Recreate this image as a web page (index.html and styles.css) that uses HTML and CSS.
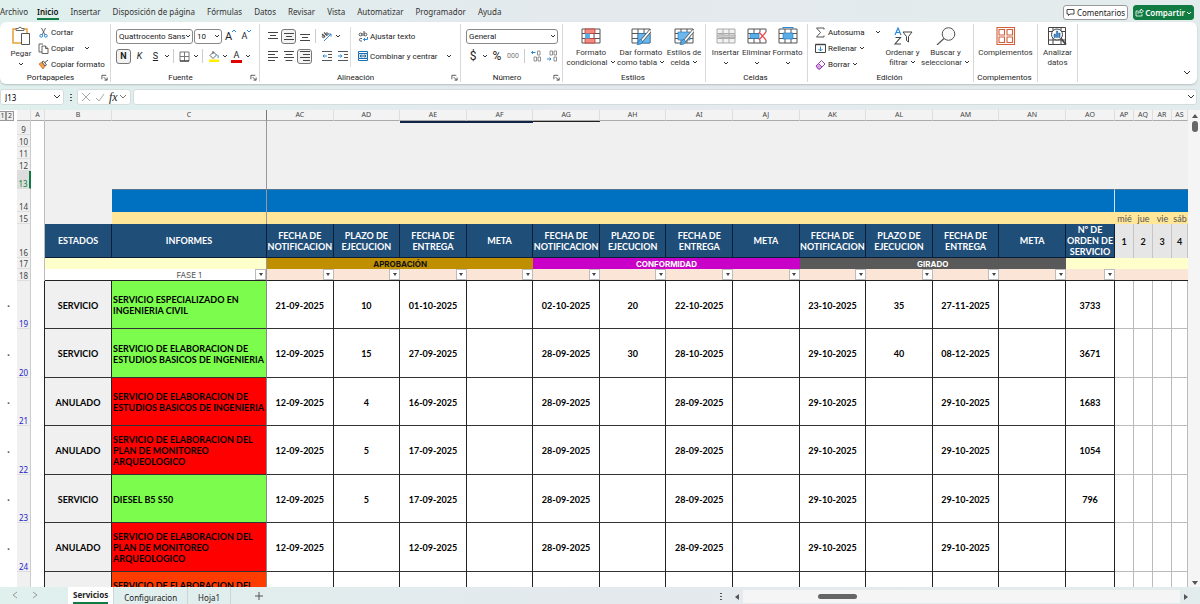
FILE: index.html
```html
<!DOCTYPE html>
<html lang="es">
<head>
    <meta charset="UTF-8">
    <meta name="viewport" content="width=device-width, initial-scale=1.0">
    <title>Servicios</title>
    <link rel="stylesheet" href="styles.css">
</head>
<body>
    <!-- Iconos reutilizados -->
    <svg class="sprite" aria-hidden="true">
        <symbol id="chev" viewBox="0 0 6 6"><path d="M1 2l2 2 2-2" fill="none" stroke="#333" stroke-width="1"/></symbol>
        <symbol id="launcher" viewBox="0 0 8 8"><path d="M1 6V1.500h5M3 3.500l3.500 3.500M7 4v3H4" fill="none" stroke="#333" stroke-width=".9"/></symbol>
        <symbol id="table" viewBox="0 0 20 18"><path d="M1 2h18v14H1zM1 6.500h18M1 11.500h18M7 2v14M13 2v14" fill="#fff" stroke="#555" stroke-width="1"/></symbol>
        <symbol id="brush" viewBox="0 0 20 18"><path d="M19 4l-8 9.500" stroke="#555" stroke-width="3.200" stroke-linecap="round"/><path d="M19 4l-8 9.500" stroke="#fff" stroke-width="1.800" stroke-linecap="round"/><path d="M6 17.500c2.500.2 5.500-.3 5.500-3.500l-2-1.500c-2.500.2-1.500 3.500-3.500 5z" fill="#5aaee8" stroke="#1f6fb5" stroke-width=".7"/></symbol>
    </svg>

    <nav class="tabs">
        <a href="#">Archivo</a>
        <a href="#" class="active">Inicio</a>
        <a href="#">Insertar</a>
        <a href="#">Disposición de página</a>
        <a href="#">Fórmulas</a>
        <a href="#">Datos</a>
        <a href="#">Revisar</a>
        <a href="#">Vista</a>
        <a href="#">Automatizar</a>
        <a href="#">Programador</a>
        <a href="#">Ayuda</a>
        <div class="tabs-right">
            <button class="comments"><svg width="9" height="9" viewBox="0 0 9 9"><path d="M1 1.500h7v4.500H4L2.500 7.500V6H1z" fill="none" stroke="#333" stroke-width=".9"/></svg>Comentarios</button>
            <button class="share"><svg width="9" height="9" viewBox="0 0 9 9"><path d="M3 3H1v5h6V6M3 5.500c0-2 1.500-3 3-3V1l2.500 2.200L6 5.200V4C5 4 4 4.300 3 5.500z" fill="none" stroke="#fff" stroke-width=".8"/></svg>Compartir<svg class="chev" viewBox="0 0 6 6"><path d="M1 2l2 2 2-2" fill="none" stroke="#fff"/></svg></button>
        </div>
    </nav>

    <!-- Cinta de opciones -->
    <div class="ribbon">
        <section class="group clipboard">
            <div class="tools">
                <button class="big paste">
                    <svg width="20" height="20" viewBox="0 0 20 20"><path d="M5 3H2v14h8M13 3h3v4" fill="none" stroke="#e8a33d" stroke-width="1.600"/><path d="M5 4.500V2.500h2Q9-.5 11 2.500h2v2z" fill="#fff" stroke="#666"/><path d="M10.500 7.500h8v11h-8z" fill="#fff" stroke="#555"/></svg>
                    <span>Pegar</span><svg class="chev"><use href="#chev"/></svg>
                </button>
                <div class="list">
                    <button><svg width="11" height="11" viewBox="0 0 11 11"><path d="M3.500 1l3.500 7M7.500 1L4 8" stroke="#555" stroke-width=".9"/><circle cx="3.200" cy="8.800" r="1.400" fill="none" stroke="#2b88d8"/><circle cx="7.800" cy="8.800" r="1.400" fill="none" stroke="#2b88d8"/></svg>Cortar</button>
                    <button><svg width="11" height="11" viewBox="0 0 11 11"><path d="M4 9H1V1h4M4 3h3.500L10 5.500V10.500H4zM7.500 3v2.500H10" fill="none" stroke="#555" stroke-width=".9"/></svg>Copiar<svg class="chev far"><use href="#chev"/></svg></button>
                    <button><svg width="11" height="11" viewBox="0 0 11 11"><path d="M1 5l3-2 3 4-2 3z" fill="#f3a04a" stroke="#c8661a" stroke-width=".7"/><path d="M4 3l1.500-1L8.500 6 7 7zM7 3.500L10 1" fill="#fff" stroke="#555"/></svg>Copiar formato</button>
                </div>
            </div>
            <h2><span>Portapapeles</span><svg class="launcher"><use href="#launcher"/></svg></h2>
        </section>

        <section class="group font">
            <div class="tools rows">
                <div class="row">
                    <select class="font-name" aria-label="Fuente"><option>Quattrocento Sans</option></select>
                    <select class="font-size" aria-label="Tamaño"><option>10</option></select>
                    <button class="ib grow" aria-label="Aumentar">A<svg width="4" height="4" viewBox="0 0 4 4"><path d="M0 3l2-2 2 2" fill="none" stroke="#2b88d8"/></svg></button>
                    <button class="ib grow less" aria-label="Disminuir">A<svg width="4" height="4" viewBox="0 0 4 4"><path d="M0 1l2 2 2-2" fill="none" stroke="#2b88d8"/></svg></button>
                </div>
                <div class="row">
                    <button class="ib on"><b>N</b></button>
                    <button class="ib"><i>K</i></button>
                    <button class="ib"><u>S</u></button>
                    <svg class="chev"><use href="#chev"/></svg>
                    <span class="sep"></span>
                    <button class="ib" aria-label="Bordes"><svg width="11" height="11" viewBox="0 0 11 11"><path d="M1 1h9v9H1zM5.500 1v9M1 5.500h9" fill="none" stroke="#777"/><path d="M1 10h9" stroke="#222"/></svg></button>
                    <svg class="chev"><use href="#chev"/></svg>
                    <span class="sep"></span>
                    <button class="ib" aria-label="Relleno"><svg width="12" height="12" viewBox="0 0 12 12"><path d="M2 5.500L5.500 2l3 3-3.500 3.500zM5 1v3" fill="#fff" stroke="#555" stroke-width=".9"/><path d="M9 4.500q2 1 1 3.500" fill="none" stroke="#2b88d8"/><path d="M1 9.500h10V12H1z" fill="#ffee00"/></svg></button>
                    <svg class="chev"><use href="#chev"/></svg>
                    <button class="ib fontcolor" aria-label="Color de fuente">A</button>
                    <svg class="chev"><use href="#chev"/></svg>
                </div>
            </div>
            <h2><span>Fuente</span><svg class="launcher"><use href="#launcher"/></svg></h2>
        </section>

        <section class="group align">
            <div class="tools">
                <div class="rows">
                    <div class="row">
                        <button class="ib" aria-label="Superior"><svg width="10" height="10" viewBox="0 0 10 10"><path d="M0 1.500h10M2 4.500h6M0 7.500h10" stroke="#444"/></svg></button>
                        <button class="ib on" aria-label="Medio"><svg width="10" height="10" viewBox="0 0 10 10"><path d="M0 2.500h10M2 5.500h6M0 8.500h10" stroke="#444"/></svg></button>
                        <button class="ib" aria-label="Inferior"><svg width="10" height="10" viewBox="0 0 10 10"><path d="M0 3.500h10M2 6.500h6M0 9.500h10" stroke="#444"/></svg></button>
                        <span class="sep"></span>
                        <button class="ib" aria-label="Orientación"><svg width="11" height="11" viewBox="0 0 11 11"><path d="M3 10l7-7M7.500 3H10v2.500" fill="none" stroke="#2b88d8"/><path d="M1 3l3 3M3 1.500l3 3" stroke="#555" stroke-width="1.200"/><circle cx="2.500" cy="5.500" r="1.200" fill="none" stroke="#555"/><circle cx="6" cy="3" r="1.200" fill="none" stroke="#555"/></svg></button>
                        <svg class="chev"><use href="#chev"/></svg>
                    </div>
                    <div class="row">
                        <button class="ib" aria-label="Izquierda"><svg width="10" height="10" viewBox="0 0 10 10"><path d="M0 .5h10M0 3.500h7M0 6.500h10M0 9.500h7" stroke="#444"/></svg></button>
                        <button class="ib" aria-label="Centrar"><svg width="10" height="10" viewBox="0 0 10 10"><path d="M0 .5h10M1.500 3.500h7M0 6.500h10M1.500 9.500h7" stroke="#444"/></svg></button>
                        <button class="ib on" aria-label="Derecha"><svg width="10" height="10" viewBox="0 0 10 10"><path d="M0 .5h10M3 3.500h7M0 6.500h10M3 9.500h7" stroke="#444"/></svg></button>
                        <span class="sep blank"></span>
                        <button class="ib" aria-label="Reducir sangría"><svg width="10" height="10" viewBox="0 0 10 10"><path d="M0 .5h10M6 3.500h4M6 6.500h4M0 9.500h10" stroke="#555"/><path d="M5 5H1M2.500 3.500L1 5l1.500 1.500" fill="none" stroke="#2b88d8"/></svg></button>
                        <button class="ib" aria-label="Aumentar sangría"><svg width="10" height="10" viewBox="0 0 10 10"><path d="M0 .5h10M6 3.500h4M6 6.500h4M0 9.500h10" stroke="#555"/><path d="M0 5h4M2.500 3.500L4 5 2.500 6.500" fill="none" stroke="#2b88d8"/></svg></button>
                    </div>
                </div>
                <span class="tall-sep"></span>
                <div class="rows wide">
                    <button class="row"><svg width="10" height="11" viewBox="0 0 10 11"><circle cx="2.500" cy="3.500" r="1.400" fill="none" stroke="#555"/><path d="M4 2v3M6 0v5" stroke="#555"/><circle cx="7.400" cy="3.500" r="1.400" fill="none" stroke="#555"/><path d="M4 7.500H2.500q-1 0-1 1.200t1 1.300H4" fill="none" stroke="#555"/><path d="M9.500 6v2.500H5.500M7 7L5.500 8.500 7 10" fill="none" stroke="#2b88d8"/></svg>Ajustar texto</button>
                    <button class="row"><svg width="10" height="10" viewBox="0 0 10 10"><path d="M.5.5h9v9h-9z" fill="#fff" stroke="#1f6fb5"/><path d="M.5 2.500h9v5h-9z" fill="#cfe6f8" stroke="#1f6fb5"/><path d="M2 5h6M3.500 3.800L2 5l1.500 1.200M6.500 3.800L8 5 6.500 6.200" fill="none" stroke="#1f4e79" stroke-width=".8"/></svg>Combinar y centrar<svg class="chev far"><use href="#chev"/></svg></button>
                </div>
            </div>
            <h2><span>Alineación</span><svg class="launcher"><use href="#launcher"/></svg></h2>
        </section>

        <section class="group number">
            <div class="tools rows">
                <div class="row">
                    <select class="format" aria-label="Formato de número"><option>General</option></select>
                </div>
                <div class="row">
                    <button class="ib sym">$</button>
                    <svg class="chev"><use href="#chev"/></svg>
                    <button class="ib sym">%</button>
                    <button class="ib zeros">000</button>
                    <span class="sep"></span>
                    <button class="ib" aria-label="Aumentar decimales"><svg width="10" height="12" viewBox="0 0 10 12"><path d="M4.500 2.500H.5M2 1L.5 2.500 2 4" fill="none" stroke="#2b88d8"/><path d="M6.500 1h2.500v4H6.500zM3 7h2.500v4H3zM7 7h2.500v4H7z" fill="none" stroke="#777" stroke-width=".8"/></svg></button>
                    <button class="ib" aria-label="Disminuir decimales"><svg width="10" height="12" viewBox="0 0 10 12"><path d="M0 9h4M2.500 7.500L4 9l-1.500 1.500" fill="none" stroke="#2b88d8"/><path d="M3 1h2.500v4H3zM7 1h2.500v4H7zM7 7h2.500v4H7z" fill="none" stroke="#777" stroke-width=".8"/></svg></button>
                </div>
            </div>
            <h2><span>Número</span><svg class="launcher"><use href="#launcher"/></svg></h2>
        </section>

        <section class="group styles">
            <div class="tools">
                <button class="big"><svg width="20" height="18" viewBox="0 0 20 18"><use href="#table" width="20" height="18"/><path d="M4 2h10v4.500H4zM4 11.500h10V16H4z" fill="#f28b82" stroke="#c0392b" stroke-width=".8"/><path d="M4 6.500h5v5H4z" fill="#5aaee8"/></svg><span>Formato<br>condicional <svg class="chev"><use href="#chev"/></svg></span></button>
                <button class="big"><svg width="20" height="18" viewBox="0 0 20 18"><use href="#table" width="20" height="18"/><path d="M7 6.500h12V16H7z" fill="#6cb8ee" stroke="#1f6fb5" stroke-width=".6"/><use href="#brush" width="20" height="18"/></svg><span>Dar formato<br>como tabla <svg class="chev"><use href="#chev"/></svg></span></button>
                <button class="big small"><svg width="20" height="18" viewBox="0 0 20 18"><use href="#table" width="20" height="18"/><path d="M4 5h12v8H4z" fill="#6cb8ee" stroke="#1f6fb5" stroke-width=".6"/><use href="#brush" width="20" height="18"/></svg><span>Estilos de<br>celda <svg class="chev"><use href="#chev"/></svg></span></button>
            </div>
            <h2><span>Estilos</span></h2>
        </section>

        <section class="group cells">
            <div class="tools">
                <button class="big"><svg width="20" height="18" viewBox="0 0 20 18"><path d="M1 2h18v14H1zM1 6.500h18M1 11.500h18M7 2v14M13 2v14" fill="#f2f2f2" stroke="#aaa"/><path d="M1 9l4-3v2h14v2.500H5V12z" fill="#ccc" stroke="#999" stroke-width=".6"/></svg><span>Insertar</span><svg class="chev"><use href="#chev"/></svg></button>
                <button class="big"><svg width="20" height="18" viewBox="0 0 20 18"><use href="#table" width="20" height="18"/><path d="M3 6.500h9v5H3z" fill="#5aaee8" stroke="#1f6fb5" stroke-width=".6"/><path d="M12.500 5H20v8h-7.500z" fill="#fff"/><path d="M12 5l7 8M19 5l-7 8" stroke="#e5484d" stroke-width="1.200"/></svg><span>Eliminar</span><svg class="chev"><use href="#chev"/></svg></button>
                <button class="big"><svg width="20" height="18" viewBox="0 0 20 18"><use href="#table" width="20" height="18"/><path d="M5 6h10v6H5z" fill="#5aaee8" stroke="#1f6fb5" stroke-width=".6"/><path d="M5 .5h10M5 0v2M15 0v2" stroke="#2b88d8"/></svg><span>Formato</span><svg class="chev"><use href="#chev"/></svg></button>
            </div>
            <h2><span>Celdas</span></h2>
        </section>

        <section class="group edit">
            <div class="tools">
                <div class="list">
                    <button><svg width="11" height="11" viewBox="0 0 11 11"><path d="M9 2.500V1H1.500L5.500 5.500 1.500 10H9V8.500" fill="none" stroke="#444" stroke-width=".9"/></svg>Autosuma<svg class="chev far"><use href="#chev"/></svg></button>
                    <button><svg width="11" height="11" viewBox="0 0 11 11"><path d="M.5 1.500h10v8H.5z" fill="#fff" stroke="#444"/><path d="M.5 1.500h10" stroke="#444" stroke-width="1.500"/><path d="M5.500 3.500v4.500M3.500 6l2 2 2-2" fill="none" stroke="#2b88d8"/></svg>Rellenar<svg class="chev"><use href="#chev"/></svg></button>
                    <button><svg width="11" height="11" viewBox="0 0 11 11"><path d="M1 7l5.500-5.500L10 5 5 10H3.500z" fill="#fff" stroke="#9b3fb5"/><path d="M1 7l2.500-2.500L7 8l-2 2H3.500z" fill="#d9a6e8" stroke="#9b3fb5"/></svg>Borrar<svg class="chev"><use href="#chev"/></svg></button>
                </div>
                <button class="big"><svg width="20" height="18" viewBox="0 0 20 18"><path d="M2 8L5 1l3 7M3 5.500h4" fill="none" stroke="#2b88d8" stroke-width="1.200"/><path d="M2.500 10.500h5L2 17h6" fill="none" stroke="#444" stroke-width="1.100"/><path d="M10 5h9l-3.500 4.500V15l-2-1.500v-4z" fill="none" stroke="#444"/></svg><span>Ordenar y<br>filtrar <svg class="chev"><use href="#chev"/></svg></span></button>
                <button class="big"><svg width="20" height="18" viewBox="0 0 20 18"><circle cx="12.500" cy="7" r="6.300" fill="#fafafa" stroke="#555"/><path d="M8 11.500L1 18" stroke="#555" stroke-width="1.200"/></svg><span>Buscar y<br>seleccionar <svg class="chev"><use href="#chev"/></svg></span></button>
            </div>
            <h2><span>Edición</span></h2>
        </section>

        <section class="group addins">
            <div class="tools">
                <button class="big"><svg width="20" height="18" viewBox="0 0 20 18"><path d="M1 .5h17.500v17H1zM3 2.500h5.500v5.500H3zM11 2.500h5.500v5.500H11zM3 10h5.500v5.500H3zM11 10h5.500v5.500H11z" fill="none" stroke="#d2603a" stroke-width="1.100"/></svg><span>Complementos</span></button>
            </div>
            <h2><span>Complementos</span></h2>
        </section>

        <section class="group analyze">
            <div class="tools">
                <button class="big"><svg width="20" height="18" viewBox="0 0 20 18"><path d="M1.500.5h17v17h-17zM1.500 4.500h17M1.500 13h17M6 .5v17M14 .5v17" fill="none" stroke="#444"/><circle cx="10" cy="7.500" r="5.500" fill="#fff" stroke="#444"/><path d="M14 11.500l5 6" stroke="#444" stroke-width="1.800"/><path d="M7 7h1.500v3.500H7zM9.300 4h1.500v6.500H9.300zM11.600 6h1.500v4.500h-1.500z" fill="#2b88d8" stroke="#1f4e79" stroke-width=".4"/></svg><span>Analizar<br>datos</span></button>
            </div>
        </section>

        <button class="collapse" aria-label="Contraer la cinta"><svg width="8" height="6" viewBox="0 0 8 6"><path d="M1 1l3 3 3-3" fill="none" stroke="#333"/></svg></button>
    </div>

    <!-- Barra de fórmulas -->
    <div class="formula-bar">
        <input type="text" class="name-box" value="J13" aria-label="Cuadro de nombres">
        <span class="dots"></span>
        <div class="fx">
            <svg width="10" height="10" viewBox="0 0 10 10"><path d="M1 1l8 8M9 1L1 9" stroke="#aaa"/></svg>
            <svg width="10" height="10" viewBox="0 0 10 10"><path d="M1 6l3 3 5-7" fill="none" stroke="#aaa"/></svg>
            <i>fx</i>
            <svg width="6" height="6" viewBox="0 0 6 6"><path d="M0 1l3 3 3-3" fill="none" stroke="#777"/></svg>
        </div>
        <input type="text" class="formula" aria-label="Barra de fórmulas">
    </div>

    <!-- Hoja -->
    <main class="sheet">
        <div class="grid">
            <table>
                <colgroup>
                    <col class="w-outline"><col class="w-num"><col class="w-a"><col class="w-b"><col class="w-c">
                    <col span="12">
                    <col class="w-ao"><col class="w-day"><col class="w-day"><col class="w-day"><col class="w-last">
                </colgroup>
                <thead>
                    <tr>
                        <th class="outline"><span class="levels"><button>1</button><button>2</button></span></th>
                        <th></th><th>A</th><th>B</th><th class="freeze">C</th>
                        <th>AC</th><th>AD</th><th>AE</th><th>AF</th><th>AG</th><th>AH</th><th>AI</th><th>AJ</th><th>AK</th><th>AL</th><th>AM</th><th>AN</th>
                        <th>AO</th><th>AP</th><th>AQ</th><th>AR</th><th>AS</th>
                    </tr>
                </thead>
                <tbody class="top">
                    <tr class="r9"><td></td><th>9</th><td class="a"></td><td class="gray freeze" colspan="2"></td><td class="gray" colspan="2"></td><td class="gray mark" colspan="2"></td><td class="gray mark thin"></td><td class="gray" colspan="12"></td></tr>
                    <tr class="r10"><td></td><th>10</th><td class="a"></td><td class="gray freeze" colspan="2"></td><td class="gray" colspan="17"></td></tr>
                    <tr class="r10"><td></td><th>11</th><td class="a"></td><td class="gray freeze" colspan="2"></td><td class="gray" colspan="17"></td></tr>
                    <tr class="r10"><td></td><th>12</th><td class="a"></td><td class="gray freeze" colspan="2"></td><td class="gray" colspan="17"></td></tr>
                    <tr class="r13"><td></td><th class="current">13</th><td class="a"></td><td class="gray freeze" colspan="2"></td><td class="gray" colspan="17"></td></tr>
                    <tr class="r14"><td></td><th>14</th><td class="a"></td><td class="gray"></td><td class="blue freeze"></td><td class="blue split" colspan="13"></td><td class="blue" colspan="4"></td></tr>
                    <tr class="r15"><td></td><th>15</th><td class="a"></td><td class="gray"></td><td class="sand freeze"></td><td class="sand" colspan="13"></td><td class="sand">mié</td><td class="sand">jue</td><td class="sand">vie</td><td class="sand">sáb</td></tr>
                    <tr class="r16">
                        <td></td><th>16</th><td class="a"></td><td class="head">ESTADOS</td><td class="head freeze">INFORMES</td>
                        <td class="head">FECHA DE NOTIFICACION</td><td class="head">PLAZO DE EJECUCION</td><td class="head">FECHA DE ENTREGA</td><td class="head">META</td>
                        <td class="head">FECHA DE NOTIFICACION</td><td class="head">PLAZO DE EJECUCION</td><td class="head">FECHA DE ENTREGA</td><td class="head">META</td>
                        <td class="head">FECHA DE NOTIFICACION</td><td class="head">PLAZO DE EJECUCION</td><td class="head">FECHA DE ENTREGA</td><td class="head">META</td>
                        <td class="head">Nº DE ORDEN DE SERVICIO</td><td class="day">1</td><td class="day">2</td><td class="day">3</td><td class="day">4</td>
                    </tr>
                    <tr class="r17"><td></td><th>17</th><td class="a"></td><td class="cream"></td><td class="cream freeze"></td><td class="phase gold" colspan="4">APROBACIÓN</td><td class="phase magenta" colspan="4">CONFORMIDAD</td><td class="phase slate" colspan="4">GIRADO</td><td class="cream" colspan="5"></td></tr>
                    <tr class="r18">
                        <td class="outline"></td><th>18</th><td class="a"></td><td></td><td class="filter fase freeze">FASE 1<button aria-label="Filtrar"></button></td>
                        <td class="filter"><button aria-label="Filtrar"></button></td><td class="filter"><button aria-label="Filtrar"></button></td><td class="filter"><button aria-label="Filtrar"></button></td><td class="filter"><button aria-label="Filtrar"></button></td>
                        <td class="filter"><button aria-label="Filtrar"></button></td><td class="filter"><button aria-label="Filtrar"></button></td><td class="filter"><button aria-label="Filtrar"></button></td><td class="filter"><button aria-label="Filtrar"></button></td>
                        <td class="filter"><button aria-label="Filtrar"></button></td><td class="filter"><button aria-label="Filtrar"></button></td><td class="filter"><button aria-label="Filtrar"></button></td><td class="filter"><button aria-label="Filtrar"></button></td>
                        <td class="filter"><button aria-label="Filtrar"></button></td><td class="peach"></td><td class="peach"></td><td class="peach"></td><td class="peach"></td>
                    </tr>
                </tbody>
                <tbody class="data">
                    <tr><td class="outline">·</td><th>19</th><td class="a"></td><td class="state">SERVICIO</td><td class="report green">SERVICIO ESPECIALIZADO EN<br>INGENIERIA CIVIL</td><td>21-09-2025</td><td>10</td><td>01-10-2025</td><td></td><td>02-10-2025</td><td>20</td><td>22-10-2025</td><td></td><td>23-10-2025</td><td>35</td><td>27-11-2025</td><td></td><td>3733</td><td class="d"></td><td class="d"></td><td class="d"></td><td class="d"></td></tr>
                    <tr><td class="outline">·</td><th>20</th><td class="a"></td><td class="state">SERVICIO</td><td class="report green">SERVICIO DE ELABORACION DE<br>ESTUDIOS BASICOS DE INGENIERIA</td><td>12-09-2025</td><td>15</td><td>27-09-2025</td><td></td><td>28-09-2025</td><td>30</td><td>28-10-2025</td><td></td><td>29-10-2025</td><td>40</td><td>08-12-2025</td><td></td><td>3671</td><td class="d"></td><td class="d"></td><td class="d"></td><td class="d"></td></tr>
                    <tr><td class="outline">·</td><th>21</th><td class="a"></td><td class="state">ANULADO</td><td class="report red">SERVICIO DE ELABORACION DE<br>ESTUDIOS BASICOS DE INGENIERIA</td><td>12-09-2025</td><td>4</td><td>16-09-2025</td><td></td><td>28-09-2025</td><td></td><td>28-09-2025</td><td></td><td>29-10-2025</td><td></td><td>29-10-2025</td><td></td><td>1683</td><td class="d"></td><td class="d"></td><td class="d"></td><td class="d"></td></tr>
                    <tr><td class="outline">·</td><th>22</th><td class="a"></td><td class="state">ANULADO</td><td class="report red">SERVICIO DE ELABORACION DEL<br>PLAN DE MONITOREO<br>ARQUEOLOGICO</td><td>12-09-2025</td><td>5</td><td>17-09-2025</td><td></td><td>28-09-2025</td><td></td><td>28-09-2025</td><td></td><td>29-10-2025</td><td></td><td>29-10-2025</td><td></td><td>1054</td><td class="d"></td><td class="d"></td><td class="d"></td><td class="d"></td></tr>
                    <tr><td class="outline">·</td><th>23</th><td class="a"></td><td class="state">SERVICIO</td><td class="report green">DIESEL B5 S50</td><td>12-09-2025</td><td>5</td><td>17-09-2025</td><td></td><td>28-09-2025</td><td></td><td>28-09-2025</td><td></td><td>29-10-2025</td><td></td><td>29-10-2025</td><td></td><td>796</td><td class="d"></td><td class="d"></td><td class="d"></td><td class="d"></td></tr>
                    <tr><td class="outline">·</td><th>24</th><td class="a"></td><td class="state">ANULADO</td><td class="report red">SERVICIO DE ELABORACION DEL<br>PLAN DE MONITOREO<br>ARQUEOLOGICO</td><td>12-09-2025</td><td></td><td>12-09-2025</td><td></td><td>28-09-2025</td><td></td><td>28-09-2025</td><td></td><td>29-10-2025</td><td></td><td>29-10-2025</td><td></td><td></td><td class="d"></td><td class="d"></td><td class="d"></td><td class="d"></td></tr>
                    <tr><td class="outline"></td><th></th><td class="a"></td><td class="state"></td><td class="report orange">SERVICIO DE ELABORACION DEL</td><td></td><td></td><td></td><td></td><td></td><td></td><td></td><td></td><td></td><td></td><td></td><td></td><td></td><td class="d"></td><td class="d"></td><td class="d"></td><td class="d"></td></tr>
                </tbody>
            </table>
        </div>
        <div class="vscroll">
            <span class="arrow up"></span>
            <span class="thumb"></span>
            <span class="arrow down"></span>
        </div>
    </main>

    <!-- Pestañas de hojas -->
    <footer class="sheetbar">
        <button class="nav" aria-label="Anterior"><svg width="6" height="8" viewBox="0 0 6 8"><path d="M5 1L1 4l4 3" fill="none" stroke="#999"/></svg></button>
        <button class="nav" aria-label="Siguiente"><svg width="6" height="8" viewBox="0 0 6 8"><path d="M1 1l4 3-4 3" fill="none" stroke="#999"/></svg></button>
        <div class="sheets">
            <button class="active"><span>Servicios</span></button>
            <button>Configuracion</button>
            <button>Hoja1</button>
        </div>
        <button class="add" aria-label="Nueva hoja"><svg width="8" height="8" viewBox="0 0 8 8"><path d="M4 0v8M0 4h8" stroke="#555"/></svg></button>
        <div class="hscroll">
            <span class="dots"></span>
            <span class="arrow left"></span>
            <span class="track"><span class="thumb"></span></span>
            <span class="arrow right"></span>
        </div>
    </footer>
</body>
</html>
```
FILE: styles.css
```css
* {
    box-sizing: border-box;
}

body {
    margin: 0;
    height: 100vh;
    display: flex;
    flex-direction: column;
    overflow: hidden;
    font-family: "Noto Sans", "Open Sans", sans-serif;
    font-size: 8px;
    color: #222;
    background: linear-gradient(90deg, #dff0ed, #e4e9ee 50%, #e3ecec);
}

button {
    font: inherit;
    color: inherit;
    background: none;
    border: 0;
    padding: 0;
    cursor: pointer;
}

svg {
    flex: none;
}

.sprite {
    display: none;
}

.chev {
    width: 6px;
    height: 6px;
}

/* Menú superior */
.tabs {
    display: flex;
    align-items: center;
    gap: 12px;
    height: 22px;
    padding: 3px 6px 0 0;
}

.tabs a {
    color: #333;
    text-decoration: none;
    line-height: 13px;
    white-space: nowrap;
    border-bottom: 2px solid transparent;
}

.tabs a:first-child {
    margin-right: -3px;
}

.tabs a.active {
    font-weight: 600;
    color: #111;
    border-color: #107c41;
}

.tabs-right {
    display: flex;
    gap: 5px;
    margin-left: auto;
}

.tabs-right button {
    display: flex;
    align-items: center;
    justify-content: center;
    gap: 2px;
    height: 15px;
    padding: 0 2px;
    border: 1px solid #999;
    border-radius: 3px;
    background: #fff;
}

.tabs-right .share {
    gap: 1px;
    padding: 0 1px;
    color: #fff;
    font-weight: 600;
    background: #107c41;
    border-color: #107c41;
}

/* Cinta */
.ribbon {
    display: flex;
    height: 62px;
    margin-right: 3px;
    padding: 2px 0;
    font-family: Roboto, sans-serif;
    background: #fff;
    border-radius: 6px;
    box-shadow: 0 1px 2px rgba(0, 0, 0, 0.2);
}

.group {
    display: flex;
    flex-direction: column;
    flex: none;
    border-right: 1px solid #d8d8d8;
}

.clipboard { width: 111px; }
.font { width: 149px; }
.align { width: 201px; }
.number { width: 102px; }
.styles { width: 143px; }
.cells { width: 102px; }
.edit { width: 166px; }
.addins { width: 64px; }
.analyze { width: 40px; }

.group h2 {
    display: flex;
    align-items: center;
    height: 10px;
    margin: 0;
    padding-right: 2px;
    font-size: 8px;
    font-weight: normal;
    text-align: center;
}

.group h2 span {
    flex: 1;
}

.launcher {
    width: 7px;
    height: 7px;
}

.tools {
    display: flex;
    justify-content: center;
    flex: 1;
}

.rows {
    display: flex;
    flex-direction: column;
    justify-content: flex-start;
    gap: 4px;
    padding: 4px 0 0 5px;
}

.row {
    display: flex;
    align-items: center;
    gap: 1px;
    height: 16px;
}

.number .row {
    gap: 2px;
}

.list {
    display: flex;
    flex-direction: column;
    flex: 1;
}

.list button,
.wide .row {
    display: flex;
    align-items: center;
    gap: 2px;
    height: 16px;
    white-space: nowrap;
}

.list .far {
    margin-left: 8px;
}

.big {
    display: flex;
    flex-direction: column;
    align-items: center;
    padding-top: 3px;
    line-height: 10px;
    white-space: nowrap;
    color: #333;
}

.big > span {
    margin-top: 3px;
}

.big > .chev {
    margin-top: 2px;
}

.paste {
    width: 38px;
    padding: 2px 0 0 4px;
}

.styles .big { width: 50px; }
.styles .small { width: 36px; }
.cells .big { width: 31px; }
.edit .list { flex: none; width: 66px; }
.edit .big { width: 43px; }
.edit .tools { justify-content: flex-start; padding-left: 7px; }

.ib {
    display: flex;
    align-items: center;
    justify-content: center;
    width: 15px;
    height: 15px;
    border-radius: 3px;
    font-size: 9px;
}

.ib.on {
    border: 1px solid #777;
    background: #f3f3f3;
}

.grow {
    align-items: flex-start;
    font-size: 11px;
    line-height: 15px;
}

.grow.less {
    font-size: 9px;
}

.fontcolor {
    width: 11px;
    height: 13px;
    margin: 0 2px;
    line-height: 10px;
    border-bottom: 3px solid #e00000;
    border-radius: 0;
}

.sym {
    font-size: 12px;
}

.zeros {
    font-size: 7px;
    color: #777;
}

.number .ib {
    width: 14px;
}

.sep {
    width: 1px;
    height: 14px;
    margin: 0 2px;
    background: #ccc;
}

.sep.blank {
    background: none;
}

.tall-sep {
    width: 1px;
    height: 40px;
    margin-top: 3px;
    background: #ddd;
}

.align .tools {
    justify-content: flex-start;
}

.align .rows:first-child {
    width: 90px;
}

.wide {
    flex: 1;
    padding-left: 7px;
}

.wide .far {
    margin-left: 6px;
}

select {
    appearance: none;
    height: 15px;
    padding: 0 2px;
    border: 1px solid #888;
    border-radius: 3px;
    font: inherit;
    color: #222;
    background: #fff url("data:image/svg+xml,%3Csvg xmlns='http://www.w3.org/2000/svg' viewBox='0 0 6 6'%3E%3Cpath d='M1 2l2 2 2-2' fill='none' stroke='%23333'/%3E%3C/svg%3E") no-repeat right 1px center / 6px 6px;
}

.font-name { width: 77px; }
.font-size { width: 28px; }
.format { width: 92px; }

.collapse {
    margin: auto 6px 4px auto;
}

/* Barra de fórmulas */
.formula-bar {
    display: flex;
    align-items: center;
    height: 16px;
    margin: 5px 3px 5px 0;
}

.formula-bar input,
.fx {
    height: 16px;
    border: 1px solid #d5dcdc;
    border-radius: 3px;
    background: #fff;
    font: inherit;
}

.formula-bar .name-box {
    width: 64px;
    padding: 0 4px;
    background: #fff url("data:image/svg+xml,%3Csvg xmlns='http://www.w3.org/2000/svg' viewBox='0 0 6 6'%3E%3Cpath d='M0 1l3 3 3-3' fill='none' stroke='%23333'/%3E%3C/svg%3E") no-repeat right 3px center / 6px 6px;
}

.dots {
    width: 2px;
    height: 7px;
    margin: 0 5px 0 6px;
    background: repeating-linear-gradient(#555 0 1px, transparent 1px 3px);
}

.fx {
    display: flex;
    align-items: center;
    gap: 4px;
    width: 54px;
    margin-right: 2px;
    padding: 0 3px;
}

.fx i {
    font-family: "Liberation Serif", serif;
    font-size: 12px;
    line-height: 12px;
}

.fx svg:last-child {
    margin-left: -2px;
}

.formula-bar .formula {
    flex: 1;
    background: #fff url("data:image/svg+xml,%3Csvg xmlns='http://www.w3.org/2000/svg' viewBox='0 0 6 6'%3E%3Cpath d='M0 1l3 3 3-3' fill='none' stroke='%23333'/%3E%3C/svg%3E") no-repeat right 2px center / 6px 6px;
}

/* Hoja de cálculo */
.sheet {
    display: flex;
    flex: 1;
    min-height: 0;
    background: #fff;
}

.grid {
    flex: 1;
    overflow: hidden;
}

table {
    width: 100%;
    table-layout: fixed;
    border-collapse: separate;
    border-spacing: 0;
}

.w-outline { width: 17px; }
.w-num { width: 14px; }
.w-a { width: 14px; }
.w-b { width: 67px; }
.w-c { width: 155px; }
.w-ao { width: 49px; }
.w-day { width: 19px; }
.w-last { width: 16px; }

td,
th {
    padding: 0;
    overflow: hidden;
    text-align: center;
}

thead th {
    height: 11px;
    font-size: 7px;
    font-weight: normal;
    line-height: 10px;
    color: #444;
    background: #f3f3f3;
    border-right: 1px solid #ddd;
    border-bottom: 1px solid #aaa;
}

thead .outline {
    border: 0;
    background: #fff;
}

.levels {
    display: flex;
}

.levels button {
    width: 8px;
    height: 10px;
    font-size: 7px;
    line-height: 8px;
    border: 1px solid #999;
    background: #eee;
}

.levels button:first-child {
    width: 6px;
    border-left: 0;
}

tbody th {
    font-size: 8px;
    font-weight: normal;
    line-height: 9px;
    vertical-align: bottom;
    color: #444;
    background: #f0f0f0;
    border-right: 1px solid #ccc;
    border-bottom: 1px solid #ddd;
}

tbody .current {
    color: #107c41;
    background: #ddd;
    border-right: 2px solid #107c41;
}

.a {
    border-right: 1px solid #bbb;
}

.r9 { height: 14px; }
.r10 { height: 12px; }
.r13 { height: 18px; }
.r14 { height: 23px; }
.r15 { height: 12px; }
.r16 { height: 34px; }
.r17 { height: 11px; }
.r18 { height: 12px; }

.gray {
    background: #f0f0f0;
}

.freeze {
    border-right: 1px solid #999;
}

thead .freeze {
    border-right-color: #777;
}

.mark {
    border-top: 2px solid #10244a;
}

.mark.thin {
    border-top: 1px solid #222;
}

.blue {
    background: #0070c0;
    border-top: 1px solid #4d7590;
}

.split {
    border-right: 1px solid #cfe3f2;
}

.sand {
    font-family: Lato, sans-serif;
    font-size: 9px;
    line-height: 11px;
    color: #555;
    background: #ffe699;
}

.head,
.day,
.data td {
    padding-top: 1px;
    font-family: Lato, sans-serif;
    font-size: 9px;
    font-weight: bold;
    line-height: 11px;
}

.head {
    padding-top: 0;
    color: #fff;
    background: #1f4e79;
    border-right: 1px solid #0c1f38;
    border-bottom: 1px solid #0c1f38;
}

.day {
    color: #111;
    background: #e7e6e6;
    border-right: 1px solid #c5c5c5;
}

.phase {
    font-family: Inter, sans-serif;
    font-size: 8px;
    font-weight: bold;
    line-height: 10px;
    color: #fff;
}

.gold { color: #111; background: #bf8f00; }
.magenta { background: #c800c8; }
.slate { background: #595959; }
.cream { background: #ffffcc; }
.peach { background: #fbe5d6; }

.r18 td {
    border-bottom: 1px solid #222;
}

.r18 .outline,
.r18 .a {
    border-bottom: 0;
}

.filter {
    position: relative;
    background: #fbe5d6;
}

.fase {
    font-family: Inter, sans-serif;
    font-size: 8px;
    line-height: 10px;
    color: #555;
    background: #fff;
}

.filter button {
    position: absolute;
    right: 0;
    bottom: 0;
    width: 11px;
    height: 11px;
    border: 1px solid #bbb;
    background: #fff;
}

.filter button::after {
    content: "";
    display: block;
    width: 0;
    margin: 0 auto;
    border: 2px solid transparent;
    border-top: 3px solid #444;
    border-bottom: 0;
}

.data tr {
    height: 48px;
}

.data tr:nth-child(even) {
    height: 49px;
}

.data th {
    color: #2222cc;
}

.data td {
    color: #000;
    border-right: 1px solid #222;
    border-bottom: 1px solid #333;
}

.data .outline,
.data .a {
    border-bottom: 0;
}

.data .outline {
    border-right: 0;
    color: #555;
}

.data .state {
    background: #f0f0f0;
}

.data .report {
    padding-left: 1px;
    text-align: left;
    border-right-color: #888;
}

.data .d {
    border-color: #bbb;
}

.green { background: #7cfc4c; }
.red { background: #ff0000; }

.data .orange {
    padding-top: 8px;
    vertical-align: top;
    background: #ff3c00;
}

/* Barras de desplazamiento */
.vscroll {
    display: flex;
    flex-direction: column;
    align-items: center;
    width: 12px;
    padding: 4px 0 2px 2px;
    background: #f5f5f5;
}

.vscroll .thumb {
    width: 6px;
    height: 11px;
    margin-top: 3px;
    border-radius: 3px;
    background: #666;
}

.arrow {
    border: 3px solid transparent;
}

.up { border-top: 0; border-bottom: 4px solid #555; }
.down { margin-top: auto; border-bottom: 0; border-top: 4px solid #555; }
.left { border-left: 0; border-right: 4px solid #555; }
.right { border-right: 0; border-left: 4px solid #555; }

.sheetbar {
    display: flex;
    align-items: center;
    height: 17px;
}

.nav {
    width: 20px;
}

.nav:first-child {
    margin-left: 5px;
}

.sheets {
    display: flex;
    align-self: stretch;
    margin-left: 23px;
}

.sheets button {
    padding: 3px 10px 0;
    line-height: 13px;
    border-right: 1px solid #ccd6d6;
}

.sheets .active {
    padding: 0 5px;
    font-weight: bold;
    background: #fff;
}

.sheets .active span {
    display: block;
    line-height: 14px;
    border-bottom: 2px solid #107c41;
}

.add {
    margin-left: 24px;
    padding-top: 2px;
}

.hscroll {
    display: flex;
    align-items: center;
    width: 39%;
    margin: 2px 12px 0 auto;
}

.hscroll .dots {
    margin: 0 13px 0 0;
}

.track {
    flex: 1;
    height: 13px;
    margin: 0 4px;
    padding: 4px 0 0 16%;
    background: #f5f5f5;
}

.track .thumb {
    display: block;
    width: 39px;
    height: 5px;
    border-radius: 3px;
    background: #666;
}
```
